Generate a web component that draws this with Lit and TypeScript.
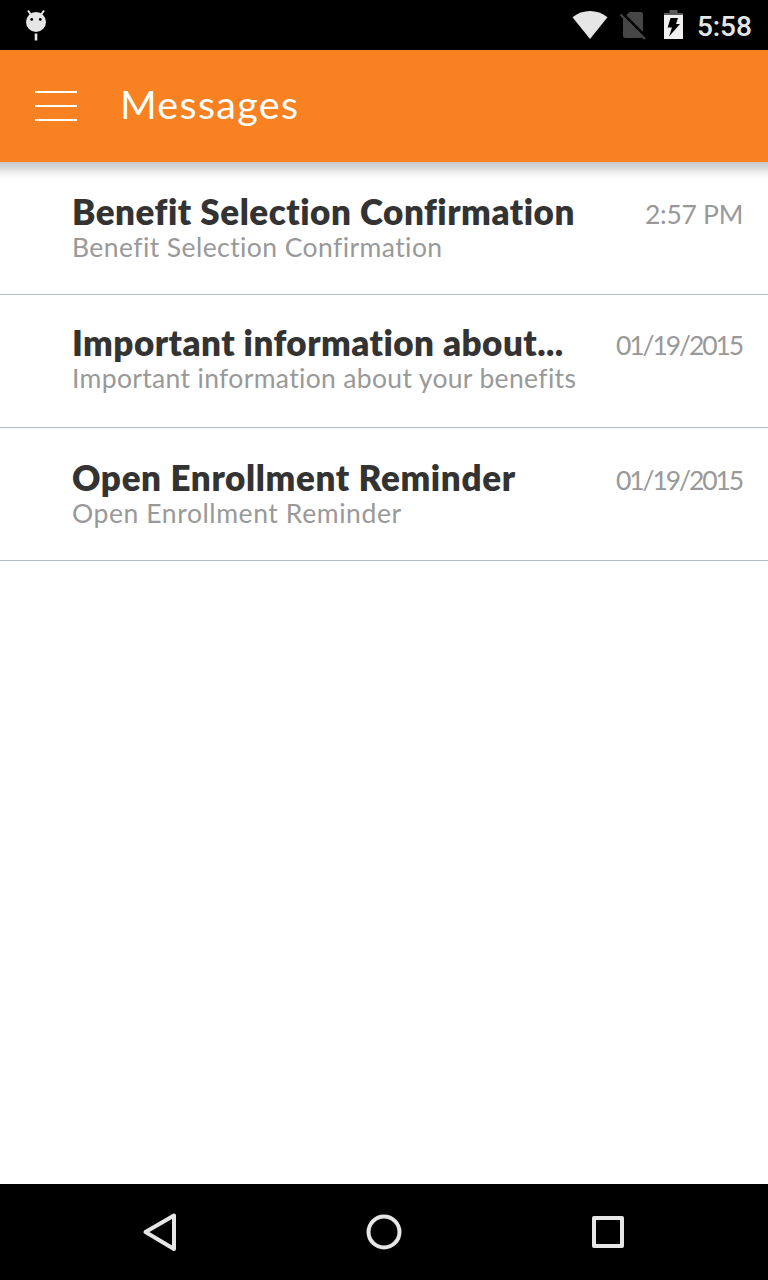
import { LitElement, html, css } from "lit";
import { customElement, property } from "lit/decorators.js";
import { classMap } from "lit/directives/class-map.js";

interface Message {
  title: string;
  preview: string;
  date: string;
  fit: "normal" | "tight" | "loose";
}

const messages: Message[] = [
  { title: "Benefit Selection Confirmation", preview: "Benefit Selection Confirmation", date: "2:57 PM", fit: "normal" },
  { title: "Important information about...", preview: "Important information about your benefits", date: "01/19/2015", fit: "tight" },
  { title: "Open Enrollment Reminder", preview: "Open Enrollment Reminder", date: "01/19/2015", fit: "loose" },
];

@customElement("status-bar")
class StatusBar extends LitElement {
  static styles = css`
    :host { display: flex; height: 50px; background: #000; color: #e6e6e6; justify-content: space-between; }
    svg { display: block; }
    .right { display: flex; }
    .clock { width: 74px; box-sizing: border-box; padding-left: 3px; font: 500 28px/53px Roboto, sans-serif; letter-spacing: -0.1px; white-space: nowrap; }
  `;
  render() {
    return html`
      <svg width="72" height="50" viewBox="0 0 72 50">
        <g stroke="#e6e6e6" stroke-width="2" fill="none"><path d="M28 10.5l2.8 4M44 10.5l-2.8 4" /><path d="M36 33.5v7" stroke-width="2.6" /></g>
        <circle cx="36" cy="22" r="10" fill="#e6e6e6" />
        <circle cx="31.7" cy="19.4" r="1.4" /><circle cx="40.3" cy="19.4" r="1.4" />
      </svg>
      <div class="right">
        <svg width="134" height="50" viewBox="560 0 134 50">
          <path d="M572.5 17.2Q580.5 11 590 11T607.500 17.200L590 39Z" fill="#e6e6e6" />
          <path d="M629.500 12H640.500Q643 12 643 14.500V35.500Q643 38 640.500 38H625.500Q623 38 623 35.500V18.500Z" fill="#464646" />
          <path d="M623.500 14.500L646 37" stroke="#000" stroke-width="3" />
          <path d="M620.500 14.500L645 39" stroke="#464646" stroke-width="2.400" />
          <path d="M669.500 10h8v3h5.500v2h-19v-2h5.500z" fill="#5a5a5a" />
          <path d="M664 15h19v24h-19z" fill="#f0f0f0" />
          <path d="M670.500 18h7.500l-2 6h4l-11 12.500 3-9h-4.300z" fill="#000" />
        </svg>
        <div class="clock">5:58</div>
      </div>`;
  }
}

@customElement("app-header")
class AppHeader extends LitElement {
  static styles = css`
    :host { display: flex; position: relative; z-index: 1; height: 112px; background: #f88122; color: #fff; }
    .menu { display: flex; flex-direction: column; gap: 12px; padding: 41px 43px 0 35px; }
    .menu span { width: 42px; height: 2px; background: #fff; }
    .heading { font: 400 39.500px/108px Lato, sans-serif; letter-spacing: 1.300px; }
    .shadow { position: absolute; top: 112px; left: 0; right: 0; height: 17px;
      background: linear-gradient(#c8c8c8, #d5d5d5 30%, #f0f0f0 65%, #fff); }
  `;
  render() {
    return html`
      <div class="menu"><span></span><span></span><span></span></div>
      <div class="heading">Messages</div>
      <div class="shadow"></div>`;
  }
}

@customElement("message-row")
class MessageRow extends LitElement {
  @property({ attribute: false }) message!: Message;
  @property({ type: Boolean }) raised = false;
  static styles = css`
    .row { display: flex; justify-content: space-between; box-sizing: border-box; height: 133px; padding: 29px 25px 0 72px; border-bottom: 1px solid #b3bcc8; white-space: nowrap; font-family: Lato, sans-serif; }
    .raised { padding-top: 27px; }
    .title { font-size: 35px; line-height: 40px; font-weight: 800; letter-spacing: 0.520px; color: #333; }
    .preview { font-size: 26.500px; line-height: 32px; letter-spacing: 0.420px; color: #999; }
    .tight .title { letter-spacing: 0.460px; }
    .tight .preview { letter-spacing: 0.340px; }
    .loose .title { letter-spacing: 0.630px; }
    .loose .preview { letter-spacing: 0.590px; }
    .date { font-size: 26.500px; line-height: 47px; letter-spacing: -0.300px; color: #999; }
    .calendar { letter-spacing: -2.100px; margin-right: 1px; }
  `;
  render() {
    const { title, preview, date, fit } = this.message;
    return html`
      <div class=${classMap({ row: true, raised: this.raised, tight: fit === "tight", loose: fit === "loose" })}>
        <div>
          <div class="title">${title}</div>
          <div class="preview">${preview}</div>
        </div>
        <div class=${classMap({ date: true, calendar: date.includes("/") })}>${date}</div>
      </div>`;
  }
}

@customElement("nav-bar")
class NavBar extends LitElement {
  static styles = css`
    :host { display: flex; justify-content: center; gap: 128px; height: 96px; background: #000; }
    svg { display: block; fill: none; stroke: #e6e6e6; stroke-width: 4; stroke-linejoin: round; }
  `;
  render() {
    return html`
      <svg width="96" height="96" viewBox="0 0 96 96"><path d="M62 31.500v33.500L33.500 48z" /></svg>
      <svg width="96" height="96" viewBox="0 0 96 96"><circle cx="48" cy="48" r="15.500" /></svg>
      <svg width="96" height="96" viewBox="0 0 96 96"><path d="M34 34h28v28H34z" /></svg>`;
  }
}

@customElement("app-root")
class AppRoot extends LitElement {
  static styles = css`
    :host { display: flex; flex-direction: column; height: 1280px; background: #fff; overflow: hidden; }
    main { flex: 1; }
  `;
  render() {
    return html`
      <status-bar></status-bar>
      <app-header></app-header>
      <main>${messages.map((m, i) => html`<message-row .message=${m} ?raised=${i === 1}></message-row>`)}</main>
      <nav-bar></nav-bar>`;
  }
}
